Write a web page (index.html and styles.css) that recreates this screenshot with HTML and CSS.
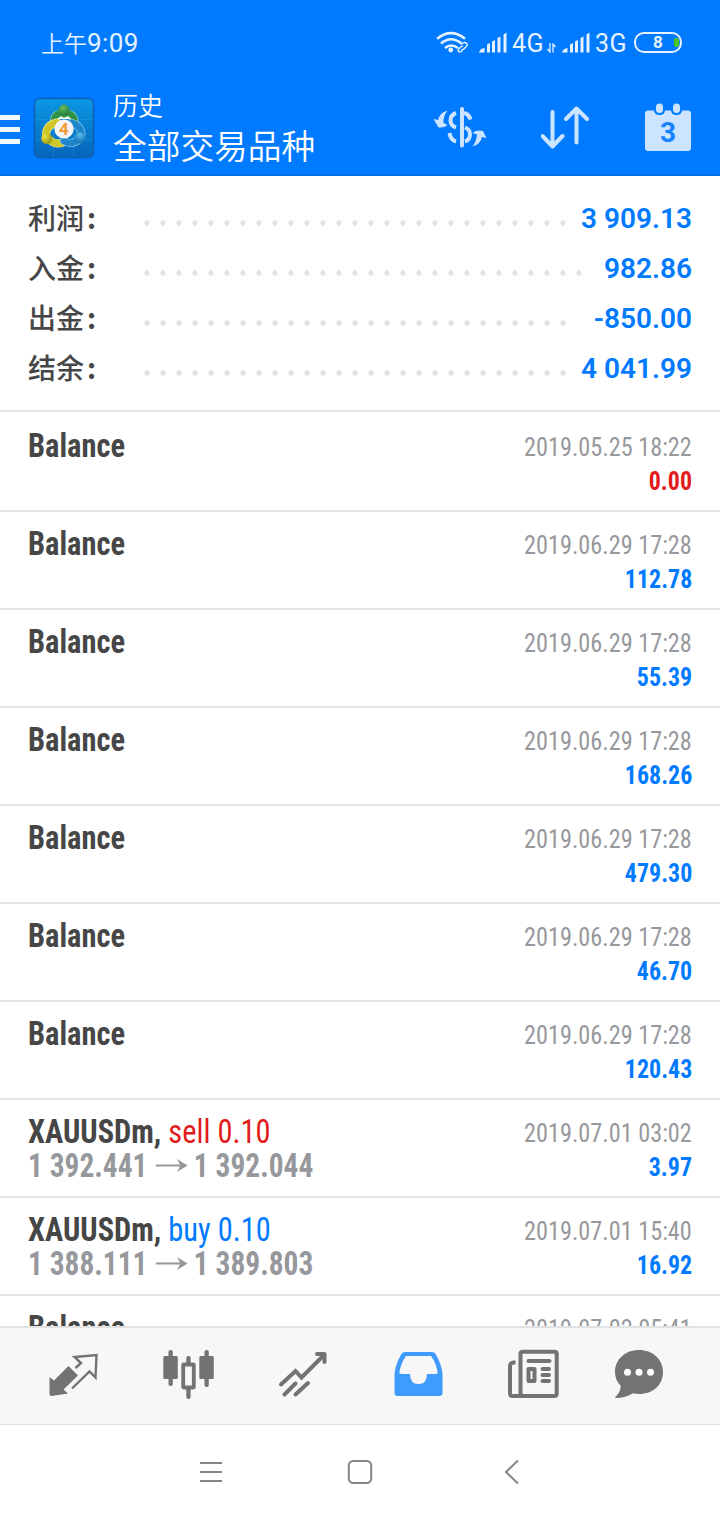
FILE: index.html
```html
<!DOCTYPE html>
<html lang="zh-CN">
<head>
    <meta charset="UTF-8">
    <meta name="viewport" content="width=device-width, initial-scale=1.0">
    <title>历史</title>
    <link rel="stylesheet" href="styles.css">
</head>
<body>
    <div class="screen">
        <header class="header">
            <div class="status">
                <span class="clock">上午<span class="time">9:09</span></span>
                <div class="signals">
                    <svg class="wifi" width="34" height="24" viewBox="436 31 34 24" fill="none" stroke="#e6f2ff" stroke-width="2.6">
                        <path d="M437.200 38.800Q451 27.500 465 38.800M441 43.500Q451 35 461.500 43.500M445 48Q451 43 458 48"/>
                        <circle cx="450.700" cy="50" r="2.400" fill="#e6f2ff" stroke="none"/>
                        <path d="M461.500 44.500l1.500-1.500q2-1.200 3.500 .3t-.2 3.200l-2.800 2.800q-1 .8-2 0M463 46.500q-1-.8-2 .2l-2 2q-1.500 1.500-.3 2.700t2.800-.2l1.200-1.200" stroke-width="1.400"/>
                    </svg>
                    <svg class="bars" width="29" height="21" viewBox="0 0 29 21" fill="#e6f2ff">
                        <path d="M0 20.500q1-4 5.500-4.500v4.500zM8 12.500l3-1.500v9.500h-3zM13 9.500l3-1.500v12.500h-3zM18.500 6l3-1.500v16h-3zM24.500 2.500l3-2v20h-3z"/>
                    </svg>
                    <span class="net">4G</span>
                    <svg class="data" width="9" height="10" viewBox="0 0 9 10" fill="none" stroke="#e6f2ff" stroke-width="1.300">
                        <path d="M3 0v9L.5 6M6 9.500V1l2.500 3"/>
                    </svg>
                    <svg class="bars" width="29" height="21" viewBox="0 0 29 21" fill="#e6f2ff">
                        <path d="M0 20.500q1-4 5.500-4.500v4.500zM8 12.500l3-1.500v9.500h-3zM13 9.500l3-1.500v12.500h-3zM18.500 6l3-1.500v16h-3zM24.500 2.500l3-2v20h-3z"/>
                    </svg>
                    <span class="net">3G</span>
                    <span class="battery">8<i class="charge"></i></span>
                </div>
            </div>
            <div class="toolbar">
                <div class="menu"><i></i><i></i><i></i></div>
                <svg class="logo" width="64" height="64" viewBox="32 96 64 64">
                    <defs>
                        <linearGradient id="tile" x1="0" y1="0" x2="0" y2="1"><stop offset="0" stop-color="#0a98e4"/><stop offset="1" stop-color="#0565ba"/></linearGradient>
                        <radialGradient id="green" cx=".4" cy=".3" r=".8"><stop offset="0" stop-color="#6dbb5f"/><stop offset="1" stop-color="#16763a"/></radialGradient>
                        <radialGradient id="yellow" cx=".3" cy=".3" r=".8"><stop offset="0" stop-color="#f0e33c"/><stop offset="1" stop-color="#8f9413"/></radialGradient>
                        <radialGradient id="blue" cx=".5" cy=".2" r=".9"><stop offset="0" stop-color="#5bbcec"/><stop offset="1" stop-color="#0864b0"/></radialGradient>
                    </defs>
                    <rect x="34.500" y="98.500" width="59" height="59" rx="5" fill="url(#tile)" stroke="#0a5fb4" stroke-width="1.500"/>
                    <path d="M53.500 99v58M73.500 99v58M35 119.500h58M35 139.500h58" stroke="#32aaf0" stroke-opacity=".3"/>
                    <g fill="none" stroke-linecap="round">
                        <path d="M54 124Q53.500 114.500 61 114h6Q74.500 114.500 74.500 124" stroke="#b9dfb4" stroke-width="8"/>
                        <path d="M54 124Q53.500 114.500 61 114h6Q74.500 114.500 74.500 124" stroke="#2d9146" stroke-width="6.800"/>
                        <path d="M57 122.500Q46 125 46 135M51 141q5 4 12 1.500" stroke="#f3eea0" stroke-width="8"/>
                        <path d="M57 122.500Q46 125 46 135M51 141q5 4 12 1.500" stroke="#cfc727" stroke-width="6.800"/>
                        <path d="M72 123Q81 126 81.500 134M77 141q-7 4-13 0" stroke="#9bd6f4" stroke-width="8"/>
                        <path d="M72 123Q81 126 81.500 134M77 141q-7 4-13 0" stroke="#1f86cc" stroke-width="6.800"/>
                    </g>
                    <path d="M57 119l4-3 3 2 4-2 3.500 3z" fill="#eef7ee"/>
                    <circle cx="64" cy="110" r="5.500" fill="url(#green)"/>
                    <circle cx="46.800" cy="138.500" r="5.500" fill="url(#yellow)"/>
                    <circle cx="79.800" cy="137.800" r="5.500" fill="url(#blue)"/>
                    <circle cx="64" cy="129" r="9.600" fill="#f4f4f6"/>
                    <text x="64" y="135.200" class="logo-num">4</text>
                </svg>
                <div class="titles">
                    <div class="title-small">历史</div>
                    <div class="title-big">全部交易品种</div>
                </div>
                <div class="actions">
                    <svg width="54" height="44" viewBox="433 106 54 44" fill="none" stroke="#cce4ff" stroke-width="4">
                        <path d="M462 109v36.500" stroke-linecap="round"/>
                        <path d="M456 113q-5.500 2-5.500 7.500 0 5 5.500 7M464 113q5 1 6.500 6.500M449.500 133q1 7 6.500 8.500M465 127.500q5 2 5 6.500 0 6-5 7.500" />
                        <path d="M447.500 110.500q-8.500 2.500-9.300 9.500l-4.700-1 5 8.500q6 .5 9-2.500l-4-2q-.5-7 4-12.500zM472.500 146.500q8.500-2.500 9.300-9.500l4.700 1-3.500-7q-6-1.500-10.500 2l4.500 1.500q-.5 6.500-4.500 12z" fill="#cce4ff" stroke="none"/>
                    </svg>
                    <svg width="50" height="44" viewBox="540.500 106 50 44" fill="none" stroke="#cce4ff" stroke-width="4" stroke-linecap="round" stroke-linejoin="round">
                        <path d="M552 112v34M542 136L552 146.500 562 136M576 142.500V109M565.500 119L576 108.500 586.500 119"/>
                    </svg>
                    <svg width="48" height="50" viewBox="644 103 48 50">
                        <path d="M648 110.500h6q.5 4.500 5.500 4.500t5.500-4.500h6q.5 4.500 5.500 4.500t5.500-4.500h6q3 0 3 3v34.500q0 3-3 3h-40q-3 0-3-3v-34.500q0-3 3-3z" fill="#cce4ff"/>
                        <rect x="656" y="103.500" width="7" height="9.500" rx="3.500" fill="#cce4ff"/>
                        <rect x="673" y="103.500" width="7" height="9.500" rx="3.500" fill="#cce4ff"/>
                        <text x="668" y="142" class="cal-num">3</text>
                    </svg>
                </div>
            </div>
        </header>

        <section class="summary">
            <div class="sum-row"><span class="sum-label">利润<b>:</b></span><span class="dots"></span><span class="sum-value">3 909.13</span></div>
            <div class="sum-row"><span class="sum-label">入金<b>:</b></span><span class="dots dots-long"></span><span class="sum-value">982.86</span></div>
            <div class="sum-row"><span class="sum-label">出金<b>:</b></span><span class="dots"></span><span class="sum-value">-850.00</span></div>
            <div class="sum-row"><span class="sum-label">结余<b>:</b></span><span class="dots"></span><span class="sum-value">4 041.99</span></div>
        </section>

        <main class="list">
            <div class="deal">
                <div class="left"><span class="symbol">Balance</span></div>
                <div class="right"><span class="date">2019.05.25 18:22</span><span class="amount red">0.00</span></div>
            </div>
            <div class="deal">
                <div class="left"><span class="symbol">Balance</span></div>
                <div class="right"><span class="date">2019.06.29 17:28</span><span class="amount">112.78</span></div>
            </div>
            <div class="deal">
                <div class="left"><span class="symbol">Balance</span></div>
                <div class="right"><span class="date">2019.06.29 17:28</span><span class="amount">55.39</span></div>
            </div>
            <div class="deal">
                <div class="left"><span class="symbol">Balance</span></div>
                <div class="right"><span class="date">2019.06.29 17:28</span><span class="amount">168.26</span></div>
            </div>
            <div class="deal">
                <div class="left"><span class="symbol">Balance</span></div>
                <div class="right"><span class="date">2019.06.29 17:28</span><span class="amount">479.30</span></div>
            </div>
            <div class="deal">
                <div class="left"><span class="symbol">Balance</span></div>
                <div class="right"><span class="date">2019.06.29 17:28</span><span class="amount">46.70</span></div>
            </div>
            <div class="deal">
                <div class="left"><span class="symbol">Balance</span></div>
                <div class="right"><span class="date">2019.06.29 17:28</span><span class="amount">120.43</span></div>
            </div>
            <div class="deal">
                <div class="left">
                    <span class="symbol">XAUUSDm, <span class="side red">sell 0.10</span></span>
                    <span class="prices">1 392.441<svg class="arrow" width="36" height="16" viewBox="0 0 33 16" preserveAspectRatio="none"><path d="M0 7h25L22 1.500 33 8 22 14.500 25 9H0z" fill="#97989c"/></svg>1 392.044</span>
                </div>
                <div class="right"><span class="date">2019.07.01 03:02</span><span class="amount">3.97</span></div>
            </div>
            <div class="deal">
                <div class="left">
                    <span class="symbol">XAUUSDm, <span class="side blue">buy 0.10</span></span>
                    <span class="prices">1 388.111<svg class="arrow" width="36" height="16" viewBox="0 0 33 16" preserveAspectRatio="none"><path d="M0 7h25L22 1.500 33 8 22 14.500 25 9H0z" fill="#97989c"/></svg>1 389.803</span>
                </div>
                <div class="right"><span class="date">2019.07.01 15:40</span><span class="amount">16.92</span></div>
            </div>
            <div class="deal">
                <div class="left"><span class="symbol">Balance</span></div>
                <div class="right"><span class="date">2019.07.02 05:41</span></div>
            </div>
        </main>

        <nav class="tabs">
            <svg width="62" height="50" viewBox="48 1349 62 50">
                <path d="M49.500 1377l4.500 3.500 14.500-14.500 9.500 9.500-14.500 14 4.500 4-16.500 2.500q-2 0-2-2z" fill="#737373"/>
                <path d="M75.500 1368l5.500-5-6.500-6 22-2-1 22.500-6-6L72 1388.500" fill="none" stroke="#737373" stroke-width="2.400"/>
            </svg>
            <svg width="62" height="50" viewBox="163 1349 62 50" fill="#737373">
                <rect x="163.300" y="1356" width="14.500" height="23" rx="1.500"/><rect x="168.500" y="1350" width="4.300" height="36" rx="2"/>
                <rect x="199.300" y="1356" width="14.500" height="23" rx="1.500"/><rect x="204.500" y="1350" width="4.300" height="37" rx="2"/>
                <rect x="186.300" y="1356" width="4.300" height="9" rx="2"/><rect x="186.300" y="1387" width="4.300" height="12" rx="2"/>
                <rect x="183.200" y="1364.500" width="10.600" height="23" rx=".5" fill="none" stroke="#737373" stroke-width="3.800"/>
            </svg>
            <svg width="62" height="50" viewBox="278 1349 62 50" fill="none" stroke="#737373" stroke-width="4" stroke-linecap="round">
                <path d="M281 1384.500l14.500-13.500 6 6.500 22-22M284.500 1394.500l11-11M295.500 1394.500l12.500-11.500"/>
                <path d="M317 1354h7.500v8" stroke-linejoin="round"/>
            </svg>
            <svg width="62" height="50" viewBox="393 1349 62 50">
                <path fill="#409bff" fill-rule="evenodd" d="M405 1352h27q2.500 0 3.700 2.200 6 10 6.800 19.800v19q0 3-3 3h-42q-3 0-3-3v-19q.8-9.800 6.800-19.800 1.200-2.200 3.700-2.200zM406 1356q-5 7-6.500 15.500-.5 2.500 2 2.500h8.500q0 10 8.500 10t8.500-10h8.500q2.500 0 2-2.500-1.500-8.500-6.500-15.500z"/>
            </svg>
            <svg width="52" height="50" viewBox="508 1349 52 50" fill="none" stroke="#737373" stroke-width="4" stroke-linejoin="round">
                <path d="M520.500 1396v-42q0-2.200 2.200-2.200h31.800q2.200 0 2.200 2.200v39.500q0 2.500-2.500 2.500h-41.700q-2.500 0-2.500-2.500v-27.500q0-3.500 5.500-3.700"/>
                <path d="M528.500 1361h21M542.500 1369h6.500M542.500 1375h6.500M542.500 1381h6.500" stroke-linecap="round"/>
                <rect x="528.500" y="1369" width="6" height="12"/>
            </svg>
            <svg width="52" height="50" viewBox="613 1349 52 50">
                <path fill="#737373" d="M639 1350c13.500 0 24 9 24 22s-10 22-24 22q-3.500 0-6-.7-7 4.700-17.500 4.700-.8 0 0-1 5-5 5.300-11-5.800-6-5.800-14c0-13 10.500-22 24-22z"/>
                <g fill="#fff"><circle cx="627.500" cy="1372.300" r="3.500"/><circle cx="639" cy="1372.300" r="3.500"/><circle cx="650.500" cy="1372.300" r="3.500"/></g>
            </svg>
        </nav>

        <footer class="keys">
            <svg width="24" height="26" viewBox="199 1459 24 26" stroke="#858585" stroke-width="2"><path d="M200 1463h22M200 1472h22M200 1481h22"/></svg>
            <svg width="32" height="26" viewBox="347 1459 32 26" fill="none" stroke="#858585" stroke-width="2"><rect x="348.800" y="1461" width="22.400" height="22" rx="4.500"/></svg>
            <svg width="16" height="26" viewBox="503 1459 16 26" fill="none" stroke="#858585" stroke-width="2"><path d="M518 1460.500L506 1472l12 11.500"/></svg>
        </footer>
    </div>
</body>
</html>
```
FILE: styles.css
```css
body {
    margin: 0;
    background: #fff;
    font-family: Roboto, "Noto Sans CJK SC", sans-serif;
    color: #464646;
}

svg {
    display: block;
    flex-shrink: 0;
}

.screen {
    width: 720px;
    height: 1520px;
    display: flex;
    flex-direction: column;
    overflow: hidden;
}

/* header */
.header {
    height: 174px;
    flex-shrink: 0;
    background: #007aff;
    border-bottom: 2px solid #006ee5;
    color: #fff;
}

.status {
    height: 86px;
    padding: 0 38px 0 41px;
    display: flex;
    justify-content: space-between;
    align-items: center;
    color: #e6f2ff;
}

.clock {
    font-size: 23px;
    font-weight: 350;
    line-height: 32px;
    margin-top: 2px;
}

.time {
    font-size: 26px;
    font-weight: 400;
    letter-spacing: 0.4px;
}

.signals {
    display: flex;
    align-items: center;
}

.wifi {
    margin-right: 9px;
}

.bars {
    margin-top: -2px;
}

.net {
    width: 33px;
    font-size: 25px;
    font-weight: 400;
    letter-spacing: 0.5px;
    margin-left: 4px;
}

.data {
    margin: 10px 6px 0 2px;
}

.battery {
    position: relative;
    box-sizing: border-box;
    width: 48px;
    height: 21px;
    margin: -2px 0 0 6px;
    border: 2px solid #e6f2ff;
    border-radius: 10px;
    font-size: 17px;
    font-weight: 700;
    line-height: 17px;
    text-align: center;
}

.charge {
    position: absolute;
    right: 1px;
    top: 4px;
    width: 5px;
    height: 9px;
    border-radius: 2px;
    background: #4fc51c;
}

.toolbar {
    height: 84px;
    display: flex;
    align-items: center;
}

.menu {
    width: 20px;
    margin: 3px 12px 0 0;
    display: flex;
    flex-direction: column;
    gap: 7px;
}

.menu i {
    height: 5px;
    background: #f2f8ff;
}

.logo-num {
    font: 700 17px Roboto, sans-serif;
    fill: #f39a35;
    text-anchor: middle;
}

.titles {
    margin: -4px 0 0 17px;
    font-family: "Noto Sans CJK SC", sans-serif;
    font-weight: 350;
}

.title-small {
    font-size: 25px;
    line-height: 38px;
}

.title-big {
    font-size: 33.7px;
    line-height: 44px;
}

.actions {
    flex: 1;
    display: flex;
    align-items: center;
    justify-content: space-between;
    padding: 0 28px 0 118px;
}

.cal-num {
    font: 700 28px Roboto, sans-serif;
    fill: #1583ff;
    text-anchor: middle;
}

/* totals */
.summary {
    height: 217px;
    flex-shrink: 0;
    padding: 17px 28px 0;
    border-bottom: 2px solid #e4e4e4;
}

.sum-row {
    height: 50px;
    display: flex;
    align-items: center;
}

.sum-label {
    width: 111px;
    flex-shrink: 0;
    font-size: 28px;
    font-weight: 500;
    font-family: "Noto Sans CJK SC", sans-serif;
    line-height: 50px;
    margin-top: -2px;
}

.sum-label b {
    margin-left: 3px;
}

.dots {
    width: 432px;
    height: 6px;
    margin: 10px auto 0 0;
    background: radial-gradient(circle, #e2e2e2 2.3px, transparent 3px) 0 0 / 16px 6px repeat-x;
}

.dots-long {
    width: 448px;
}

.sum-value {
    color: #007aff;
    font-size: 28px;
    font-weight: 600;
}

/* deals */
.list {
    flex: 1;
    min-height: 0;
    overflow: hidden;
    padding-top: 2px;
    font-stretch: 75%;
}

.deal {
    box-sizing: border-box;
    height: 98px;
    padding: 14px 28px 0;
    border-bottom: 2px solid #e4e4e4;
    display: flex;
    justify-content: space-between;
    line-height: 34px;
}

.left,
.right {
    display: flex;
    flex-direction: column;
}

.right {
    padding-top: 2px;
    align-items: flex-end;
    font-size: 26px;
}

/* numbers and names are set a little tighter than the condensed cut */
.symbol {
    font-size: 33px;
    font-weight: 700;
    transform: translateY(0.5px) scaleX(0.922);
    transform-origin: left;
}

.side {
    font-weight: 400;
}

.prices {
    display: flex;
    align-items: center;
    font-size: 33px;
    font-weight: 700;
    color: #97989c;
    transform: translateY(0.5px) scaleX(0.892);
    transform-origin: left;
}

.arrow {
    margin: 0 7px 0 9px;
}

.date {
    color: #97989c;
    transform: scaleX(0.933);
    transform-origin: right;
}

.amount {
    font-weight: 700;
    color: #007aff;
    transform: scaleX(0.92);
    transform-origin: right;
}

.red {
    color: #e31b1b;
}

.blue {
    color: #007aff;
}

/* bottom bars */
.tabs {
    box-sizing: border-box;
    height: 99px;
    flex-shrink: 0;
    padding: 0 55px 4px 48px;
    background: #f7f7f7;
    border-top: 2px solid #e2e2e2;
    border-bottom: 1px solid #e0e0e0;
    display: flex;
    align-items: center;
    justify-content: space-between;
}

.keys {
    height: 94px;
    flex-shrink: 0;
    display: flex;
    align-items: center;
    justify-content: space-between;
    padding: 0 201px 1px 199px;
}
```
